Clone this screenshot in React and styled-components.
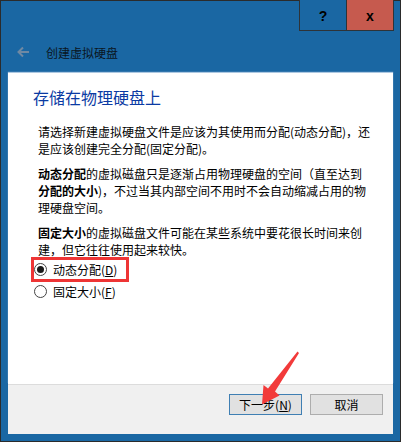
import React from "react";
import styled, { createGlobalStyle } from "styled-components";

const Global = createGlobalStyle`
  html, body { margin: 0; padding: 0; background: #ffffff; }
  body { font-family: "Noto Sans CJK SC", "Liberation Sans", sans-serif; }
`;

const Window = styled.div`
  position: relative;
  box-sizing: border-box;
  width: 401px;
  height: 442px;
  border: 1px solid #2b2b2b;
  background: #1a67a3;
  display: flex;
  flex-direction: column;
  padding-bottom: 7px;
  font-family: "Noto Sans CJK SC", "Liberation Sans", sans-serif;
`;

const TitleBar = styled.div`
  height: 30px;
  display: flex;
  justify-content: flex-end;
  padding-right: 6px;
  flex-shrink: 0;
`;

const CaptionGroup = styled.div`
  display: flex;
  border: 1px solid #2e3338;
  border-top: none;
  margin-top: -1px;
  height: 31px;
  box-sizing: border-box;
`;

const CaptionButton = styled.div`
  width: ${(p) => p.$w}px;
  display: flex;
  align-items: center;
  justify-content: center;
  background: ${(p) => (p.$close ? "#c65a4e" : "#1a67a3")};
  border-left: ${(p) => (p.$close ? "1px solid #2e3338" : "none")};
  font-family: "Liberation Sans", sans-serif;
  font-weight: 700;
  font-size: 14px;
  color: #000;
  padding-top: 1px;
`;

const Header = styled.div`
  height: 42px;
  display: flex;
  align-items: center;
  padding-left: 15px;
  gap: 16px;
  flex-shrink: 0;
`;

const HeaderTitle = styled.span`
  font-size: 12px;
  color: #0a1521;
  line-height: 17px;
`;

const Panel = styled.div`
  flex: 1;
  margin: 0 7px;
  background: #ffffff;
  box-shadow: 0 -1px 1px rgba(210, 225, 240, 0.8);
  padding: 14px 0 0 25px;
  display: flex;
  flex-direction: column;
`;

const Heading = styled.h1`
  margin: 0;
  font-weight: 400;
  font-size: 16px;
  line-height: 20px;
  color: #0a3aa3;
`;

const Body = styled.div`
  margin: 16px 0 0 5px;
  display: flex;
  flex-direction: column;
  gap: 8px;
`;

const Para = styled.p`
  margin: 0;
  font-size: 12px;
  line-height: 17px;
  color: #000;
  white-space: nowrap;
  b { font-weight: 700; }
`;

const RadioGroup = styled.div`
  margin: 0 0 0 1px;
  display: flex;
  flex-direction: column;
`;

const RadioRow = styled.label`
  position: relative;
  height: 22px;
  display: flex;
  align-items: center;
  gap: 6px;
  font-size: 12px;
  line-height: 17px;
  color: #000;
`;

const RadioCircle = styled.span`
  box-sizing: border-box;
  width: 13px;
  height: 13px;
  border-radius: 50%;
  border: 1px solid #444;
  background: #fff;
  display: flex;
  align-items: center;
  justify-content: center;
  &::after {
    content: "";
    width: 7px;
    height: 7px;
    border-radius: 50%;
    background: ${(p) => (p.$checked ? "#1a1a1a" : "transparent")};
  }
`;

const Highlight = styled.span`
  position: absolute;
  left: -3px;
  top: -1px;
  width: 98px;
  height: 25px;
  box-sizing: border-box;
  border: 3px solid #ee3535;
  pointer-events: none;
`;

const Footer = styled.div`
  height: 40px;
  margin: 0 7px;
  background: #f0f0f0;
  border-top: 1px solid #dcdcdc;
  display: flex;
  justify-content: flex-end;
  align-items: flex-start;
  gap: 8px;
  padding: 9px 10px 0 0;
  flex-shrink: 0;
`;

const Button = styled.button`
  box-sizing: border-box;
  width: 73px;
  height: 21px;
  padding: 0;
  background: #e1e1e1;
  border: 1px solid ${(p) => (p.$default ? "#3f7fb3" : "#adadad")};
  font-family: "Noto Sans CJK SC", "Liberation Sans", sans-serif;
  font-size: 12px;
  line-height: 17px;
  color: #000;
`;

const Arrow = styled.svg`
  position: absolute;
  left: 257px;
  top: 347px;
  width: 44px;
  height: 62px;
  pointer-events: none;
`;

export default function App() {
  return (
    <>
      <Global />
      <Window>
        <TitleBar>
          <CaptionGroup>
            <CaptionButton $w={46}>?</CaptionButton>
            <CaptionButton $w={46} $close>x</CaptionButton>
          </CaptionGroup>
        </TitleBar>
        <Header>
          <svg width="14" height="12" viewBox="0 0 14 12">
            <path d="M13 6H2.5M7 1.5L2.5 6 7 10.5" fill="none" stroke="#6f89a3" strokeWidth="2" />
          </svg>
          <HeaderTitle>创建虚拟硬盘</HeaderTitle>
        </Header>
        <Panel>
          <Heading>存储在物理硬盘上</Heading>
          <Body>
            <Para>
              请选择新建虚拟硬盘文件是应该为其使用而分配(动态分配)，还
              <br />
              是应该创建完全分配(固定分配)。
            </Para>
            <Para>
              <b>动态分配</b>的虚拟磁盘只是逐渐占用物理硬盘的空间（直至达到
              <br />
              <b>分配的大小</b>)，不过当其内部空间不用时不会自动缩减占用的物
              <br />
              理硬盘空间。
            </Para>
            <Para>
              <b>固定大小</b>的虚拟磁盘文件可能在某些系统中要花很长时间来创
              <br />
              建，但它往往使用起来较快。
            </Para>
          </Body>
          <RadioGroup>
            <RadioRow>
              <RadioCircle $checked />
              <span>
                动态分配(<u>D</u>)
              </span>
              <Highlight />
            </RadioRow>
            <RadioRow>
              <RadioCircle />
              <span>
                固定大小(<u>F</u>)
              </span>
            </RadioRow>
          </RadioGroup>
        </Panel>
        <Footer>
          <Button $default>
            下一步(<u>N</u>)
          </Button>
          <Button>取消</Button>
        </Footer>
        <Arrow viewBox="0 0 44 62">
          <polygon
            points="39.5,3.5 41,5 17,43.5 21.5,47.5 4,56.5 5.5,37 10,40.5"
            fill="#f23a3a"
          />
        </Arrow>
      </Window>
    </>
  );
}
